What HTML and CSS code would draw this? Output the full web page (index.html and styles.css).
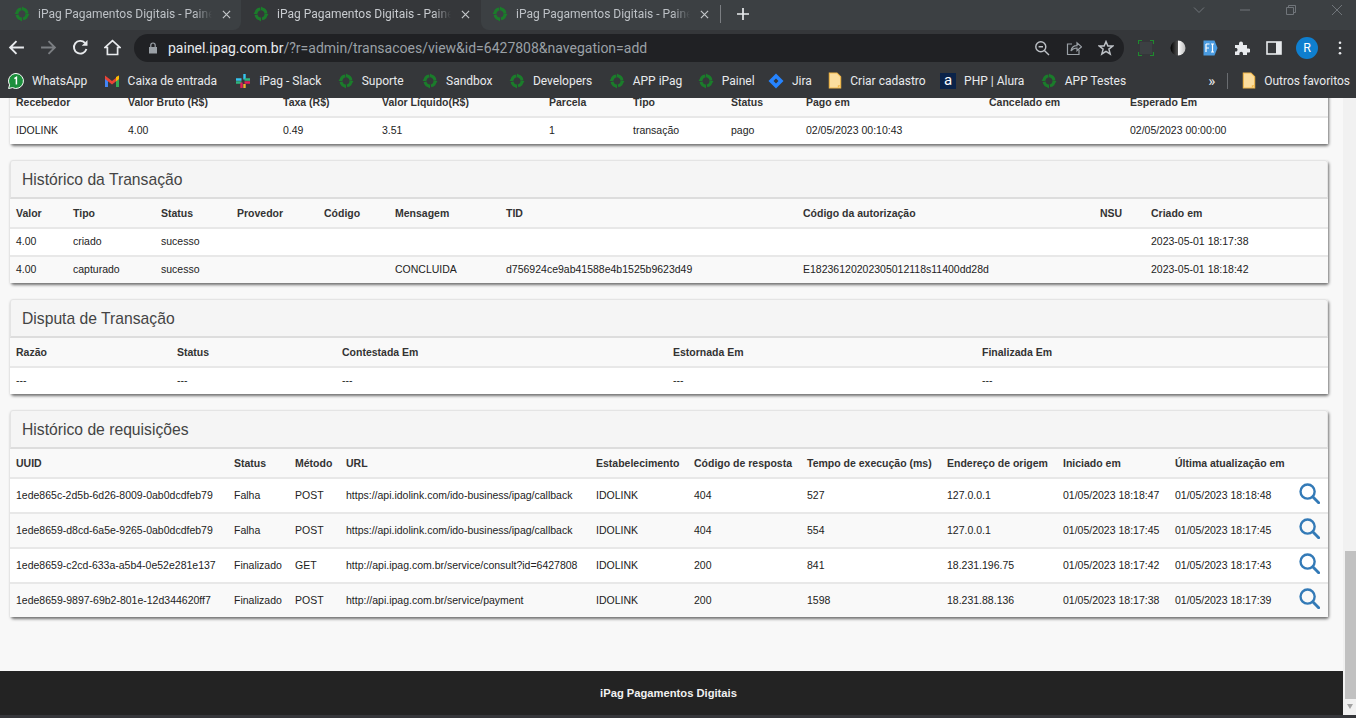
FILE: index.html
```html
<!DOCTYPE html>
<html lang="pt-BR">
<head>
<meta charset="utf-8">
<title>iPag Pagamentos Digitais - Painel</title>
<link rel="stylesheet" href="styles.css">
</head>
<body>
<svg class="defs" width="0" height="0" aria-hidden="true">
  <symbol id="ipag" viewBox="0 0 16 16">
    <circle cx="8" cy="8" r="5" fill="none" stroke="#1b7c2b" stroke-width="3" stroke-dasharray="6.6 1.25"/>
    <path d="M8 0.5 11.4 3 8 4.2ZM15.5 8 13 11.4 11.8 8ZM8 15.5 4.6 13 8 11.8ZM0.5 8 3 4.6 4.2 8Z" fill="#1b7c2b"/>
  </symbol>
  <symbol id="folder" viewBox="0 0 14 18">
    <path d="M1 1H9L13 5V17H1Z" fill="#fbdd9e" stroke="#f2b84b" stroke-width="1.2"/>
    <path d="M10 17V14H13Z" fill="#f2b84b"/>
  </symbol>
  <symbol id="lupa" viewBox="0 0 22 22">
    <circle cx="9" cy="9" r="7.4" fill="none" stroke="#337ab7" stroke-width="2.5"/>
    <path d="M14.4 14.4 20.6 20.6" stroke="#337ab7" stroke-width="3" stroke-linecap="round"/>
  </symbol>
</svg>

<header class="chrome">
  <div class="tabstrip">
    <div class="tab tab-first"><svg class="fav"><use href="#ipag"/></svg><span class="tab-title">iPag Pagamentos Digitais - Painel</span><svg class="tab-x" viewBox="0 0 10 10"><path d="M1 1 9 9M9 1 1 9" stroke="#c4c7ca" stroke-width="1.3"/></svg></div>
    <div class="tab tab-active"><svg class="fav"><use href="#ipag"/></svg><span class="tab-title">iPag Pagamentos Digitais - Painel</span><svg class="tab-x" viewBox="0 0 10 10"><path d="M1 1 9 9M9 1 1 9" stroke="#c4c7ca" stroke-width="1.3"/></svg></div>
    <div class="tab tab-last"><svg class="fav"><use href="#ipag"/></svg><span class="tab-title">iPag Pagamentos Digitais - Painel</span><svg class="tab-x" viewBox="0 0 10 10"><path d="M1 1 9 9M9 1 1 9" stroke="#c4c7ca" stroke-width="1.3"/></svg></div>
    <div class="strip-rest">
      <span class="tab-sep"></span>
      <svg class="newtab" viewBox="0 0 14 14"><path d="M7 1V13M1 7H13" stroke="#e8eaed" stroke-width="1.7"/></svg>
      <div class="winctl">
        <svg class="wc" viewBox="0 0 12 12"><path d="M1 3.5 6 8.5 11 3.5" fill="none" stroke="#70757a"/></svg>
        <svg class="wc" viewBox="0 0 12 12"><path d="M1 6H11" stroke="#70757a"/></svg>
        <svg class="wc" viewBox="0 0 12 12"><path d="M1.5 3.5H8.5V10.5H1.5ZM3.5 3.5V1.5H10.5V8.5H8.5" fill="none" stroke="#70757a"/></svg>
        <svg class="wc" viewBox="0 0 12 12"><path d="M1 1 11 11M11 1 1 11" stroke="#70757a"/></svg>
      </div>
    </div>
  </div>

  <div class="toolbar">
    <svg class="nav" viewBox="0 0 16 16"><path d="M15 8H2M8 2 2 8 8 14" fill="none" stroke="#e8eaed" stroke-width="1.8"/></svg>
    <svg class="nav" viewBox="0 0 16 16"><path d="M1 8H14M8 2 14 8 8 14" fill="none" stroke="#7b7e82" stroke-width="1.8"/></svg>
    <svg class="nav" viewBox="0 0 16 16"><path d="M13.6 9.5A6 6 0 1 1 12.2 3.6" fill="none" stroke="#e8eaed" stroke-width="1.8"/><path d="M14.6 1V6.4H9.2Z" fill="#e8eaed"/></svg>
    <svg class="nav" viewBox="0 0 16 16"><path d="M8 1.5 1 8H3.2V14.6H12.8V8H15Z" fill="none" stroke="#e8eaed" stroke-width="1.6"/></svg>
    <div class="omnibox">
      <svg class="lock" viewBox="0 0 10 12"><path d="M1 5H9V11.5H1Z" fill="#9aa0a6"/><path d="M2.8 5V3.2A2.2 2.2 0 0 1 7.2 3.2V5" fill="none" stroke="#9aa0a6" stroke-width="1.2"/></svg>
      <span class="url"><span class="url-host">painel.ipag.com.br</span>/?r=admin/transacoes/view&amp;id=6427808&amp;navegation=add</span>
      <svg class="omni-ic" viewBox="0 0 16 16"><circle cx="6.8" cy="6.8" r="5" fill="none" stroke="#bdc1c6" stroke-width="1.4"/><path d="M4.6 6.8H9M10.4 10.4 15 15" stroke="#bdc1c6" stroke-width="1.4"/></svg>
      <svg class="omni-ic" viewBox="0 0 16 16"><path d="M6 4H1.5V14.5H13V10" fill="none" stroke="#9aa0a6" stroke-width="1.2"/><path d="M5 11C5.5 7.5 8 5.6 11 5.6V2.8L15.5 6.8 11 10.6V8C8.5 8 6.5 9 5 11Z" fill="none" stroke="#9aa0a6" stroke-width="1.2"/></svg>
      <svg class="omni-ic" viewBox="0 0 16 16"><path d="M8 1.6 9.9 6H14.8L10.9 9.1 12.2 14 8 11.3 3.8 14 5.1 9.1 1.2 6H6.1Z" fill="none" stroke="#bdc1c6" stroke-width="1.5"/></svg>
    </div>
    <div class="ext">
      <svg class="ext-ic" viewBox="0 0 16 16"><path d="M0.5 4V0.5H4M12 0.5H15.5V4M15.5 12V15.5H12M4 15.5H0.5V12" fill="none" stroke="#1f8a2e" stroke-width="1.2"/><rect x="2" y="2" width="12" height="12" fill="#3c4043"/></svg>
      <svg class="ext-ic" viewBox="0 0 16 16"><defs><linearGradient id="half"><stop offset="0" stop-color="#000"/><stop offset=".5" stop-color="#555"/><stop offset=".5" stop-color="#fff"/><stop offset="1" stop-color="#bbb"/></linearGradient></defs><circle cx="8" cy="8" r="7.5" fill="url(#half)"/></svg>
      <svg class="ext-ic" viewBox="0 0 16 16"><path d="M1.5 0.5H12.5L15.5 8 12.5 15.5H1.5Z" fill="#4a9be0"/><path d="M4 4H7.5M4 4V12M4 8H7M9 4H12M9 12H12M10.5 4V12" stroke="#fff" stroke-width="1.2" fill="none"/></svg>
      <svg class="ext-ic" viewBox="0 0 16 16"><path d="M1 5H5V3.5A2 2 0 0 1 9 3.5V5H13V8.5H14.5A2 2 0 0 1 14.5 12.5H13V15H9V13.5A1.8 1.8 0 0 0 5.4 13.5V15H1V11.5H2.5A2 2 0 0 0 2.5 8H1Z" fill="#e8eaed"/></svg>
      <svg class="ext-ic" viewBox="0 0 16 16"><rect x="1" y="2" width="14" height="12" fill="none" stroke="#e8eaed" stroke-width="1.6"/><rect x="10" y="2" width="5" height="12" fill="#e8eaed"/></svg>
      <span class="avatar">R</span>
      <svg class="dots" viewBox="0 0 4 16"><circle cx="2" cy="2" r="1.5" fill="#e8eaed"/><circle cx="2" cy="8" r="1.5" fill="#e8eaed"/><circle cx="2" cy="14" r="1.5" fill="#e8eaed"/></svg>
    </div>
  </div>

  <nav class="bookmarks">
    <a class="bm"><svg class="bm-ic" viewBox="0 0 16 16"><path d="M8 .5A7.5 7.5 0 1 1 4.4 14.6L.6 15.5 1.6 11.8A7.5 7.5 0 0 1 8 .5Z" fill="#1c8f3c" stroke="#fff" stroke-width="1"/><path d="M6.4 5.6 8.4 4.4V11.6" fill="none" stroke="#fff" stroke-width="1.5"/></svg>WhatsApp</a>
    <a class="bm"><svg class="bm-ic" viewBox="0 0 16 14"><path d="M1 3V13H4V6Z" fill="#4285f4"/><path d="M15 3V13H12V6Z" fill="#34a853"/><path d="M1 1.5 8 7 15 1.5V5L8 10.5 1 5Z" fill="#ea4335"/><path d="M12 3 15 1.5V5L12 7.2Z" fill="#fbbc04"/></svg>Caixa de entrada</a>
    <a class="bm"><svg class="bm-ic" viewBox="0 0 16 16"><path d="M1 6.5H6.5M9.5 1V6.5" stroke="#36c5f0" stroke-width="2.4"/><path d="M9.5 6.5H15M1 9.5H6.5" stroke="#2eb67d" stroke-width="2.4"/><path d="M6.5 9.5V15M9.5 9.5H15" stroke="#e01e5a" stroke-width="2.4"/><path d="M9.5 11V15" stroke="#ecb22e" stroke-width="2.4"/></svg>iPag - Slack</a>
    <a class="bm"><svg class="bm-ic"><use href="#ipag"/></svg>Suporte</a>
    <a class="bm"><svg class="bm-ic"><use href="#ipag"/></svg>Sandbox</a>
    <a class="bm"><svg class="bm-ic"><use href="#ipag"/></svg>Developers</a>
    <a class="bm"><svg class="bm-ic"><use href="#ipag"/></svg>APP iPag</a>
    <a class="bm"><svg class="bm-ic"><use href="#ipag"/></svg>Painel</a>
    <a class="bm"><svg class="bm-ic" viewBox="0 0 16 16"><path d="M8 .5 15.5 8 8 15.5 .5 8Z" fill="#2684ff"/><path d="M8 5.5 10.5 8 8 10.5 5.5 8Z" fill="#33363a"/></svg>Jira</a>
    <a class="bm"><svg class="bm-ic bm-folder"><use href="#folder"/></svg>Criar cadastro</a>
    <a class="bm"><span class="alura">a</span>PHP | Alura</a>
    <a class="bm"><svg class="bm-ic"><use href="#ipag"/></svg>APP Testes</a>
    <div class="bm-end">
      <span class="chev">»</span><span class="bm-sep"></span>
      <a class="bm"><svg class="bm-ic bm-folder"><use href="#folder"/></svg>Outros favoritos</a>
    </div>
  </nav>
</header>

<main class="viewport">
  <div class="page">
    <section class="panel panel-scrolled">
      <table class="t1">
        <colgroup><col><col><col><col><col><col><col><col><col><col></colgroup>
        <thead><tr><th>Recebedor</th><th>Valor Bruto (R$)</th><th>Taxa (R$)</th><th>Valor Líquido(R$)</th><th>Parcela</th><th>Tipo</th><th>Status</th><th>Pago em</th><th>Cancelado em</th><th>Esperado Em</th></tr></thead>
        <tbody><tr><td>IDOLINK</td><td>4.00</td><td>0.49</td><td>3.51</td><td>1</td><td>transação</td><td>pago</td><td>02/05/2023 00:10:43</td><td></td><td>02/05/2023 00:00:00</td></tr></tbody>
      </table>
    </section>

    <section class="panel">
      <h3 class="panel-title">Histórico da Transação</h3>
      <table class="t2">
        <colgroup><col><col><col><col><col><col><col><col><col><col></colgroup>
        <thead><tr><th>Valor</th><th>Tipo</th><th>Status</th><th>Provedor</th><th>Código</th><th>Mensagem</th><th>TID</th><th>Código da autorização</th><th>NSU</th><th>Criado em</th></tr></thead>
        <tbody>
          <tr><td>4.00</td><td>criado</td><td>sucesso</td><td></td><td></td><td></td><td></td><td></td><td></td><td>2023-05-01 18:17:38</td></tr>
          <tr class="alt"><td>4.00</td><td>capturado</td><td>sucesso</td><td></td><td></td><td>CONCLUIDA</td><td>d756924ce9ab41588e4b1525b9623d49</td><td>E18236120202305012118s11400dd28d</td><td></td><td>2023-05-01 18:18:42</td></tr>
        </tbody>
      </table>
    </section>

    <section class="panel">
      <h3 class="panel-title">Disputa de Transação</h3>
      <table class="t3">
        <colgroup><col><col><col><col><col></colgroup>
        <thead><tr><th>Razão</th><th>Status</th><th>Contestada Em</th><th>Estornada Em</th><th>Finalizada Em</th></tr></thead>
        <tbody><tr><td>---</td><td>---</td><td>---</td><td>---</td><td>---</td></tr></tbody>
      </table>
    </section>

    <section class="panel">
      <h3 class="panel-title">Histórico de requisições</h3>
      <table class="t4">
        <colgroup><col><col><col><col><col><col><col><col><col><col><col></colgroup>
        <thead><tr><th>UUID</th><th>Status</th><th>Método</th><th>URL</th><th>Estabelecimento</th><th>Código de resposta</th><th>Tempo de execução (ms)</th><th>Endereço de origem</th><th>Iniciado em</th><th>Última atualização em</th><th></th></tr></thead>
        <tbody>
          <tr><td>1ede865c-2d5b-6d26-8009-0ab0dcdfeb79</td><td>Falha</td><td>POST</td><td>https://api.idolink.com/ido-business/ipag/callback</td><td>IDOLINK</td><td>404</td><td>527</td><td>127.0.0.1</td><td>01/05/2023 18:18:47</td><td>01/05/2023 18:18:48</td><td class="action"><svg class="lupa"><use href="#lupa"/></svg></td></tr>
          <tr class="alt"><td>1ede8659-d8cd-6a5e-9265-0ab0dcdfeb79</td><td>Falha</td><td>POST</td><td>https://api.idolink.com/ido-business/ipag/callback</td><td>IDOLINK</td><td>404</td><td>554</td><td>127.0.0.1</td><td>01/05/2023 18:17:45</td><td>01/05/2023 18:17:45</td><td class="action"><svg class="lupa"><use href="#lupa"/></svg></td></tr>
          <tr><td>1ede8659-c2cd-633a-a5b4-0e52e281e137</td><td>Finalizado</td><td>GET</td><td>http://api.ipag.com.br/service/consult?id=6427808</td><td>IDOLINK</td><td>200</td><td>841</td><td>18.231.196.75</td><td>01/05/2023 18:17:42</td><td>01/05/2023 18:17:43</td><td class="action"><svg class="lupa"><use href="#lupa"/></svg></td></tr>
          <tr class="alt"><td>1ede8659-9897-69b2-801e-12d344620ff7</td><td>Finalizado</td><td>POST</td><td>http://api.ipag.com.br/service/payment</td><td>IDOLINK</td><td>200</td><td>1598</td><td>18.231.88.136</td><td>01/05/2023 18:17:38</td><td>01/05/2023 18:17:39</td><td class="action"><svg class="lupa"><use href="#lupa"/></svg></td></tr>
        </tbody>
      </table>
    </section>

    <footer class="footer">iPag Pagamentos Digitais</footer>
  </div>
  <div class="scrollbar">
    <div class="scroll-track"><div class="scroll-thumb"></div></div>
    <span class="scroll-arrow"></span>
  </div>
</main>
<div class="statusline"></div>
</body>
</html>
```

FILE: styles.css
```css
* { box-sizing: border-box; }
html, body { margin: 0; height: 100%; }
body {
  width: 1356px;
  height: 718px;
  overflow: hidden;
  display: flex;
  flex-direction: column;
  background: #35363a;
  font-family: "Liberation Sans", Arial, sans-serif;
}
.defs { position: absolute; }

/* Browser chrome */
.chrome { height: 98px; flex: none; background: #35373a; color: #e8eaed; font-family: Roboto, "Noto Sans", sans-serif; }
.tabstrip { display: flex; height: 30px; background: #35373a; }
.tab { width: 240px; display: flex; align-items: center; padding: 0 11px 2px 12px; font-size: 12px; color: #bdc1c6; background: #3c4043; }
.tab-first { border-bottom-right-radius: 8px; width: 241px; padding-left: 14px; padding-right: 10px; }
.tab-active { background: #35373a; color: #c8cbcf; }
.tab-last { border-bottom-left-radius: 8px; width: 239px; padding-left: 11px; }
.fav { width: 16px; height: 16px; flex: none; margin-right: 8px; }
.tab-title { flex: 1; overflow: hidden; white-space: nowrap; -webkit-mask-image: linear-gradient(90deg, #000 90%, transparent); mask-image: linear-gradient(90deg, #000 90%, transparent); }
.tab-x { width: 9px; height: 9px; margin-left: 10px; flex: none; }
.strip-rest { flex: 1; display: flex; align-items: center; background: #3c4043; padding-bottom: 2px; }
.tab-sep { width: 1px; height: 18px; background: #7b7e82; }
.newtab { width: 14px; height: 14px; margin-left: 15px; }
.winctl { margin-left: auto; display: flex; gap: 34px; padding-right: 13px; align-items: center; margin-top: -8px; }
.wc { width: 12px; height: 12px; }

.toolbar { display: flex; align-items: center; height: 35px; padding-left: 8px; }
.nav { width: 17px; height: 17px; margin-right: 15px; flex: none; }
.omnibox { width: 990px; height: 28px; margin-left: -2px; background: #202124; border-radius: 14px; display: flex; align-items: center; padding: 0 10px 0 14px; }
.lock { width: 10px; height: 12px; margin-right: 10px; flex: none; }
.url { flex: 1; font-size: 14px; color: #9aa0a6; white-space: nowrap; }
.url-host { color: #e8eaed; }
.omni-ic { width: 16px; height: 16px; margin-left: 16px; flex: none; }
.ext { display: flex; align-items: center; margin-left: 14px; gap: 16px; }
.ext-ic { width: 16px; height: 16px; flex: none; }
.avatar { width: 22px; height: 22px; margin-left: -2px; border-radius: 50%; background: #0f7fcf; color: #fff; font-size: 12.5px; display: flex; align-items: center; justify-content: center; }
.dots { width: 4px; height: 14px; margin-left: 4px; }

.bookmarks { display: flex; align-items: center; height: 33px; padding: 0 6px 2px 8px; gap: 16.4px; font-size: 12px; white-space: nowrap; }
.bm { display: flex; align-items: center; color: #e8eaed; }
.bm:nth-child(3), .bm:nth-child(5) { margin-left: 2px; }
.bm:nth-child(8) { margin-left: -1px; }
.bm:nth-child(9) { margin-left: -3px; }
.bm:nth-child(11) { margin-left: -2px; }
.bm-ic { width: 16px; height: 16px; margin-right: 8px; flex: none; }
.bm-folder { width: 14px; height: 17px; }
.alura { width: 16px; height: 16px; margin-right: 8px; background: #0b2349; color: #fff; font-size: 15px; line-height: 14px; text-align: center; }
.bm-end { margin-left: auto; display: flex; align-items: center; }
.chev { font-size: 15px; line-height: 16px; margin-right: 12px; }
.bm-sep { width: 1px; height: 16px; background: #6a6d71; margin-right: 12px; }

/* Page */
.viewport { height: 617px; flex: none; display: flex; background: #f8f8f8; overflow: hidden; }
.page { width: 1343px; flex: none; display: flex; flex-direction: column; align-items: flex-start; background: #f8f8f8; overflow: hidden; }
.panel {
  width: 1318px;
  flex: none;
  margin: 0 0 16px 10px;
  background: #fff;
  border-radius: 3px;
  box-shadow: 1px 2px 3px rgba(0, 0, 0, .55);
}
.panel-scrolled { margin-top: -10px; }
.panel-title {
  margin: 0;
  height: 39px;
  padding: 2px 0 0 11px;
  display: flex;
  align-items: center;
  font-size: 15.7px;
  font-weight: 400;
  color: #444;
  background: #f5f5f5;
  border: 1px solid #e4e4e4;
  border-bottom: 2px solid #ddd;
  border-radius: 3px 3px 0 0;
}
table { width: 1318px; table-layout: fixed; border-collapse: separate; border-spacing: 0; font-size: 10.5px; color: #222; }
th, td { height: 28px; padding: 0 0 0 6px; text-align: left; white-space: nowrap; }
th { background: #f9f9f9; color: #333; font-weight: 700; }
td { padding-bottom: 2px; border-top: 2px solid #e8e8e8; background: #fff; }
.alt td { background: #f9f9f9; }
.t4 td { height: 35px; }
.t4 td.action { vertical-align: top; padding: 4px 0 0 6px; }
.lupa { display: block; width: 21px; height: 21px; }

.t1 col:nth-child(1) { width: 112px; } .t1 col:nth-child(2) { width: 155px; } .t1 col:nth-child(3) { width: 99px; }
.t1 col:nth-child(4) { width: 167px; } .t1 col:nth-child(5) { width: 84px; } .t1 col:nth-child(6) { width: 98px; }
.t1 col:nth-child(7) { width: 75px; } .t1 col:nth-child(8) { width: 183px; } .t1 col:nth-child(9) { width: 141px; }

.t2 col:nth-child(1) { width: 57px; } .t2 col:nth-child(2) { width: 88px; } .t2 col:nth-child(3) { width: 76px; }
.t2 col:nth-child(4) { width: 87px; } .t2 col:nth-child(5) { width: 71px; } .t2 col:nth-child(6) { width: 111px; }
.t2 col:nth-child(7) { width: 297px; } .t2 col:nth-child(8) { width: 297px; } .t2 col:nth-child(9) { width: 51px; }

.t3 col:nth-child(1) { width: 161px; } .t3 col:nth-child(2) { width: 165px; } .t3 col:nth-child(3) { width: 331px; } .t3 col:nth-child(4) { width: 309px; }

.t4 col:nth-child(1) { width: 218px; } .t4 col:nth-child(2) { width: 61px; } .t4 col:nth-child(3) { width: 51px; }
.t4 col:nth-child(4) { width: 250px; } .t4 col:nth-child(5) { width: 98px; } .t4 col:nth-child(6) { width: 113px; }
.t4 col:nth-child(7) { width: 140px; } .t4 col:nth-child(8) { width: 116px; } .t4 col:nth-child(9) { width: 112px; }
.t4 col:nth-child(10) { width: 124px; }

.footer {
  margin-top: auto;
  width: 100%;
  height: 44px;
  flex: none;
  padding-right: 6px;
  background: #232323;
  color: #f1f1f1;
  font-size: 11.2px;
  font-weight: 700;
  display: flex;
  align-items: center;
  justify-content: center;
}

.scrollbar { width: 13px; flex: none; background: #f1f1f1; display: flex; flex-direction: column; padding-left: 2px; }
.scroll-track { flex: 1; display: flex; flex-direction: column; justify-content: flex-end; }
.scroll-thumb { height: 148px; background: #c1c1c1; }
.scroll-arrow { height: 16px; position: relative; }
.scroll-arrow::after { content: ""; position: absolute; left: 2px; top: 5px; border: 3.5px solid transparent; border-top: 5px solid #a3a3a3; }
.statusline { height: 3px; flex: none; background: #35363a; }
```
